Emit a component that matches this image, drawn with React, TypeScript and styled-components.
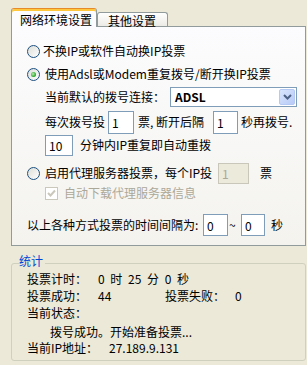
import React from "react";
import styled, { createGlobalStyle } from "styled-components";

const GlobalStyle = createGlobalStyle`
  html, body {
    margin: 0;
    padding: 0;
    background: #ece9d8;
  }
  body {
    font-family: "SimSun", "Noto Sans CJK SC", sans-serif;
    font-size: 12px;
    color: #000;
  }
`;

const Window = styled.div`
  width: 307px;
  height: 365px;
  box-sizing: border-box;
  padding: 8px 0 0 11px;
  overflow: hidden;
`;

const TabBar = styled.div`
  display: flex;
  align-items: flex-end;
  height: 18px;
`;

const Tab = styled.div<{ $active?: boolean }>`
  position: relative;
  box-sizing: border-box;
  display: flex;
  align-items: center;
  white-space: nowrap;
  border: 1px solid #919b9c;
  border-bottom: none;
  border-radius: 3px 3px 0 0;
  ${(p) =>
    p.$active
      ? `
    z-index: 1;
    width: 86px;
    height: 19px;
    margin-bottom: -1px;
    padding: 2px 0 0 8px;
    background: #fcfcfe;
    border-top-color: #e68b2c;
    box-shadow: inset 0 2px 0 #ffc83c;
  `
      : `
    width: 71px;
    height: 14px;
    padding: 1px 0 0 10px;
    background: linear-gradient(#ffffff, #ecebe6);
  `}
`;

const Panel = styled.div`
  width: 295px;
  box-sizing: border-box;
  border: 1px solid #919b9c;
  background: linear-gradient(#fcfcfe, #f4f3ee);
  padding: 13px 0 8px 0;
`;

const Row = styled.div<{ $indent: number; $h: number; $mt?: number }>`
  display: flex;
  align-items: center;
  height: ${(p) => p.$h}px;
  margin-top: ${(p) => p.$mt ?? 0}px;
  padding-left: ${(p) => p.$indent}px;
  white-space: nowrap;
`;

const Label = styled.span<{ $w?: number; $ml?: number; $muted?: boolean }>`
  display: inline-block;
  flex: none;
  width: ${(p) => (p.$w ? `${p.$w}px` : "auto")};
  margin-left: ${(p) => p.$ml ?? 0}px;
  color: ${(p) => (p.$muted ? "#aca899" : "#000")};
  line-height: 14px;
`;

const TextBox = styled.input<{ $w: number; $h: number; $ml?: number }>`
  flex: none;
  box-sizing: border-box;
  width: ${(p) => p.$w}px;
  height: ${(p) => p.$h}px;
  margin: 0 0 0 ${(p) => p.$ml ?? 0}px;
  padding: 0 0 0 3px;
  border: 1px solid #7f9db9;
  background: #fff;
  font: inherit;
  color: #000;
  outline: none;

  &:disabled {
    border-color: #c9c7ba;
    background: #ebeadb;
    color: #aca899;
  }
`;

const Radio = styled.span<{ $checked?: boolean }>`
  flex: none;
  box-sizing: border-box;
  width: 13px;
  height: 13px;
  border-radius: 50%;
  border: 1px solid #1c5180;
  background: linear-gradient(135deg, #dcdcd7, #ffffff);
  display: flex;
  align-items: center;
  justify-content: center;

  &::after {
    content: "";
    display: ${(p) => (p.$checked ? "block" : "none")};
    width: 5px;
    height: 5px;
    border-radius: 50%;
    background: radial-gradient(circle at 40% 40%, #b6f0ae, #21a121 70%);
  }
`;

const CheckBox = styled.span`
  flex: none;
  box-sizing: border-box;
  width: 13px;
  height: 13px;
  border: 1px solid #cac8bb;
  background: #fff;
  display: flex;
  align-items: center;
  justify-content: center;
`;

const Combo = styled.div<{ $w: number; $ml?: number }>`
  flex: none;
  box-sizing: border-box;
  width: ${(p) => p.$w}px;
  height: 20px;
  margin-left: ${(p) => p.$ml ?? 0}px;
  border: 1px solid #7f9db9;
  background: #fff;
  display: flex;
  align-items: center;
  justify-content: space-between;
  padding: 0 1px 0 4px;
`;

const ComboText = styled.span`
  font-weight: 700;
  line-height: 14px;
`;

const ComboButton = styled.span`
  box-sizing: border-box;
  width: 16px;
  height: 16px;
  border: 1px solid #b5c9f5;
  border-radius: 2px;
  background: linear-gradient(135deg, #d9e5fd, #b8cbf7);
  display: flex;
  align-items: center;
  justify-content: center;
`;

const Group = styled.fieldset`
  width: 295px;
  box-sizing: border-box;
  margin: 9px 0 0 0;
  padding: 0 0 4px 15px;
  border: 1px solid #d0d0bf;
  border-radius: 3px;
  min-width: 0;
`;

const Legend = styled.legend`
  margin-left: -8px;
  padding: 0 2px 4px 0;
  color: #0046d5;
  line-height: 12px;
`;

const StatRow = styled.div<{ $mt?: number; $indent?: number }>`
  display: flex;
  align-items: center;
  height: 16px;
  margin-top: ${(p) => p.$mt ?? 0}px;
  padding-left: ${(p) => p.$indent ?? 0}px;
  white-space: pre;
  word-spacing: 3px;
`;

function Chevron() {
  return (
    <svg width="9" height="6" viewBox="0 0 9 6">
      <polyline points="1,1 4.5,4.5 8,1" fill="none" stroke="#4d6185" strokeWidth="2" />
    </svg>
  );
}

function Tick() {
  return (
    <svg width="9" height="9" viewBox="0 0 9 9">
      <polyline points="1,4 3.5,6.5 8,1.5" fill="none" stroke="#cac8bb" strokeWidth="2" />
    </svg>
  );
}

export default function App() {
  return (
    <>
      <GlobalStyle />
      <Window>
        <TabBar>
          <Tab $active>网络环境设置</Tab>
          <Tab>其他设置</Tab>
        </TabBar>

        <Panel>
          <Row $indent={15} $h={22}>
            <Radio />
            <Label $ml={3}>不换IP或软件自动换IP投票</Label>
          </Row>
          <Row $indent={15} $h={22} $mt={1}>
            <Radio $checked />
            <Label $ml={5}>使用Adsl或Modem重复拨号/断开换IP投票</Label>
          </Row>
          <Row $indent={33} $h={22} $mt={1}>
            <Label $w={120}>当前默认的拨号连接：</Label>
            <Combo $w={127} $ml={5}>
              <ComboText>ADSL</ComboText>
              <ComboButton>
                <Chevron />
              </ComboButton>
            </Combo>
          </Row>
          <Row $indent={33} $h={24} $mt={2}>
            <Label $w={60}>每次拨号投</Label>
            <TextBox $w={26} $h={23} $ml={3} readOnly value="1" />
            <Label $w={72} $ml={4}>票, 断开后隔</Label>
            <TextBox $w={25} $h={23} $ml={3} readOnly value="1" />
            <Label $ml={3}>秒再拨号.</Label>
          </Row>
          <Row $indent={33} $h={22}>
            <TextBox $w={28} $h={21} readOnly value="10" />
            <Label $ml={7}>分钟内IP重复即自动重拨</Label>
          </Row>
          <Row $indent={15} $h={22} $mt={6}>
            <Radio />
            <Label $w={170} $ml={5}>启用代理服务器投票，每个IP投</Label>
            <TextBox $w={31} $h={21} $ml={3} disabled value="1" />
            <Label $ml={11}>票</Label>
          </Row>
          <Row $indent={33} $h={18}>
            <CheckBox>
              <Tick />
            </CheckBox>
            <Label $ml={6} $muted>
              自动下载代理服务器信息
            </Label>
          </Row>
          <Row $indent={15} $h={24} $mt={11}>
            <Label $w={174}>以上各种方式投票的时间间隔为:</Label>
            <TextBox $w={25} $h={22} $ml={2} readOnly value="0" />
            <Label $w={12} $ml={1}>
              ~
            </Label>
            <TextBox $w={24} $h={22} readOnly value="0" />
            <Label $ml={6}>秒</Label>
          </Row>
        </Panel>

        <Group>
          <Legend>统计</Legend>
          <StatRow>
            <Label $w={71}>投票计时：</Label>
            <Label>0 时 25 分 0 秒</Label>
          </StatRow>
          <StatRow $mt={1}>
            <Label $w={71}>投票成功：</Label>
            <Label $w={67}>44</Label>
            <Label $w={70}>投票失败：</Label>
            <Label>0</Label>
          </StatRow>
          <StatRow $mt={1}>
            <Label>当前状态：</Label>
          </StatRow>
          <StatRow $mt={3} $indent={23}>
            <Label>拨号成功。开始准备投票...</Label>
          </StatRow>
          <StatRow>
            <Label $w={82}>当前IP地址：</Label>
            <Label>27.189.9.131</Label>
          </StatRow>
        </Group>
      </Window>
    </>
  );
}
